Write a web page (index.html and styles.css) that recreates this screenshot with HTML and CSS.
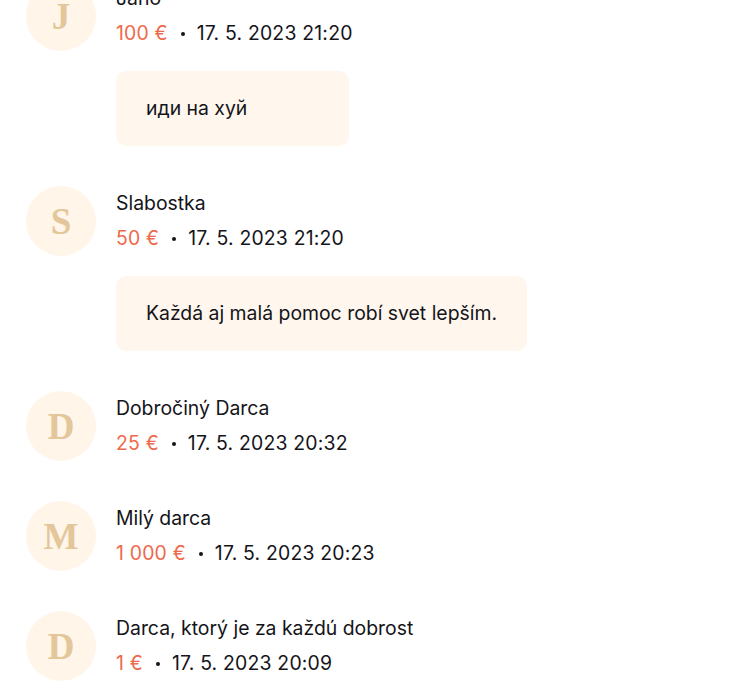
FILE: index.html
```html
<!DOCTYPE html>
<html lang="sk">
<head>
    <meta charset="UTF-8">
    <title>Darcovia</title>
    <link rel="stylesheet" href="styles.css">
</head>
<body>
<ul class="donations">
    <li class="donation">
        <div class="avatar">J</div>
        <div class="info">
            <div class="name">Jano</div>
            <div class="meta"><span class="amount">100 €</span><span class="dot"></span><span class="date">17. 5. 2023 21:20</span></div>
            <div class="message">иди на хуй</div>
        </div>
    </li>
    <li class="donation">
        <div class="avatar">S</div>
        <div class="info">
            <div class="name">Slabostka</div>
            <div class="meta"><span class="amount">50 €</span><span class="dot"></span><span class="date">17. 5. 2023 21:20</span></div>
            <div class="message">Každá aj malá pomoc robí svet lepším.</div>
        </div>
    </li>
    <li class="donation">
        <div class="avatar">D</div>
        <div class="info">
            <div class="name">Dobročiný Darca</div>
            <div class="meta"><span class="amount">25 €</span><span class="dot"></span><span class="date">17. 5. 2023 20:32</span></div>
        </div>
    </li>
    <li class="donation">
        <div class="avatar">M</div>
        <div class="info">
            <div class="name">Milý darca</div>
            <div class="meta"><span class="amount">1 000 €</span><span class="dot"></span><span class="date">17. 5. 2023 20:23</span></div>
        </div>
    </li>
    <li class="donation">
        <div class="avatar">D</div>
        <div class="info">
            <div class="name">Darca, ktorý je za každú dobrost</div>
            <div class="meta"><span class="amount">1 €</span><span class="dot"></span><span class="date">17. 5. 2023 20:09</span></div>
        </div>
    </li>
</ul>
</body>
</html>
```

FILE: styles.css
```css
*{
    margin: 0;
    padding: 0;
    box-sizing: border-box;
}
body{
    background: #fff;
    color: #141419;
    font-family: "Inter", "Noto Sans", sans-serif;
    font-size: 19.4px;
    overflow: hidden;
}
li{
    list-style: none;
}
.donations{
    margin-top: -19px;
    padding-left: 26px;
    display: flex;
    flex-direction: column;
    gap: 40px;
}
.donation{
    display: flex;
    gap: 20px;
    align-items: flex-start;
}
.avatar{
    flex: none;
    width: 70px;
    height: 70px;
    border-radius: 50%;
    background: #fff5e9;
    color: #e3c699;
    font-family: "Liberation Serif", serif;
    font-weight: bold;
    font-size: 37px;
    display: flex;
    align-items: center;
    justify-content: center;
}
.info{
    display: flex;
    flex-direction: column;
    align-items: flex-start;
}
.name, .meta{
    line-height: 35px;
}
.meta{
    display: flex;
    align-items: center;
    letter-spacing: 0.2px;
}
.amount{
    color: #ee6a4c;
}
.dot{
    width: 4px;
    height: 4px;
    border-radius: 50%;
    background: #141419;
    margin: 0 12px 0 13px;
}
.message{
    margin-top: 20px;
    min-width: 233px;
    padding: 26px 30px;
    line-height: 23px;
    background: #fff7ee;
    border-radius: 10px;
}
```
